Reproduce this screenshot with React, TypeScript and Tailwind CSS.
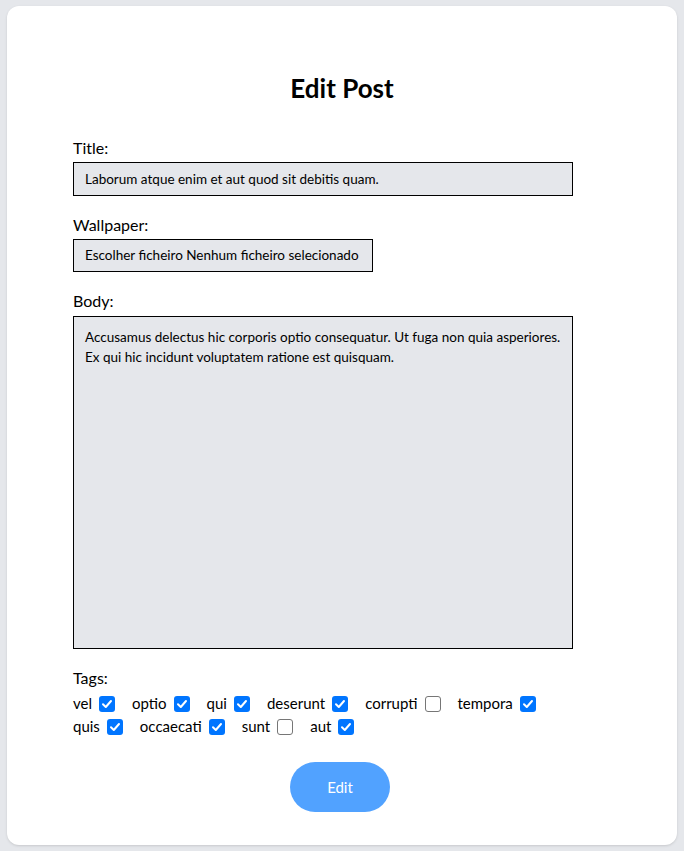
import { FC } from "react";

const tags: { name: string; checked: boolean }[] = [
  { name: "vel", checked: true },
  { name: "optio", checked: true },
  { name: "qui", checked: true },
  { name: "deserunt", checked: true },
  { name: "corrupti", checked: false },
  { name: "tempora", checked: true },
  { name: "quis", checked: true },
  { name: "occaecati", checked: true },
  { name: "sunt", checked: false },
  { name: "aut", checked: true },
];

const Checkbox: FC<{ checked: boolean }> = ({ checked }) => {
  return checked ? (
    <span className="ml-[7px] inline-flex h-[16px] w-[16px] items-center justify-center rounded-[3px] bg-[#0075ff]">
      <svg width="12" height="12" viewBox="0 0 12 12" fill="none">
        <path
          d="M2 6.3 L4.8 9 L10 3"
          stroke="white"
          strokeWidth="2"
          strokeLinecap="round"
          strokeLinejoin="round"
        />
      </svg>
    </span>
  ) : (
    <span className="ml-[7px] inline-block h-[16px] w-[16px] rounded-[3px] border border-[#767676] bg-white"></span>
  );
};

const App: FC = () => {
  return (
    <div
      className="min-h-screen bg-gray-200 px-[7px] py-[6px] text-black"
      style={{ fontFamily: '"Lato", "Open Sans", sans-serif' }}
    >
      <div className="h-[839px] rounded-xl bg-white pt-[66px] shadow-sm">
        <h1 className="text-center text-[26px] leading-8 font-bold">Edit Post</h1>
        <form className="mt-[32px] pl-[66px]" onSubmit={(e) => e.preventDefault()}>
          <div className="text-base leading-6">Title:</div>
          <div className="mt-[2px] flex h-[34px] w-[500px] items-center border border-black bg-gray-200 px-[11px] text-[13.5px]">
            Laborum atque enim et aut quod sit debitis quam.
          </div>

          <div className="mt-[17px] text-base leading-6">Wallpaper:</div>
          <div className="mt-[2px] flex h-[33px] w-[300px] items-center border border-black bg-gray-200 px-[11px] text-[13.5px]">
            Escolher ficheiro Nenhum ficheiro selecionado
          </div>

          <div className="mt-[17px] text-base leading-6">Body:</div>
          <div className="mt-[3px] h-[333px] w-[500px] border border-black bg-gray-200 px-[11px] py-[10px] text-[13.5px] leading-[20px]">
            Accusamus delectus hic corporis optio consequatur. Ut fuga non quia
            asperiores. Ex qui hic incidunt voluptatem ratione est quisquam.
          </div>

          <div className="mt-[17px] text-base leading-6">Tags:</div>
          <div className="mt-[2px] flex w-[500px] flex-wrap gap-x-[17px] text-[15px] leading-[23px]">
            {tags.map((tag) => (
              <label key={tag.name} className="inline-flex items-center">
                <span>{tag.name}</span>
                <Checkbox checked={tag.checked} />
              </label>
            ))}
          </div>

          <div className="mt-[24px] flex w-[534px] justify-center">
            <button className="h-[50px] w-[100px] rounded-full bg-blue-400 text-[15px] text-white">
              Edit
            </button>
          </div>
        </form>
      </div>
    </div>
  );
};

export default App;
